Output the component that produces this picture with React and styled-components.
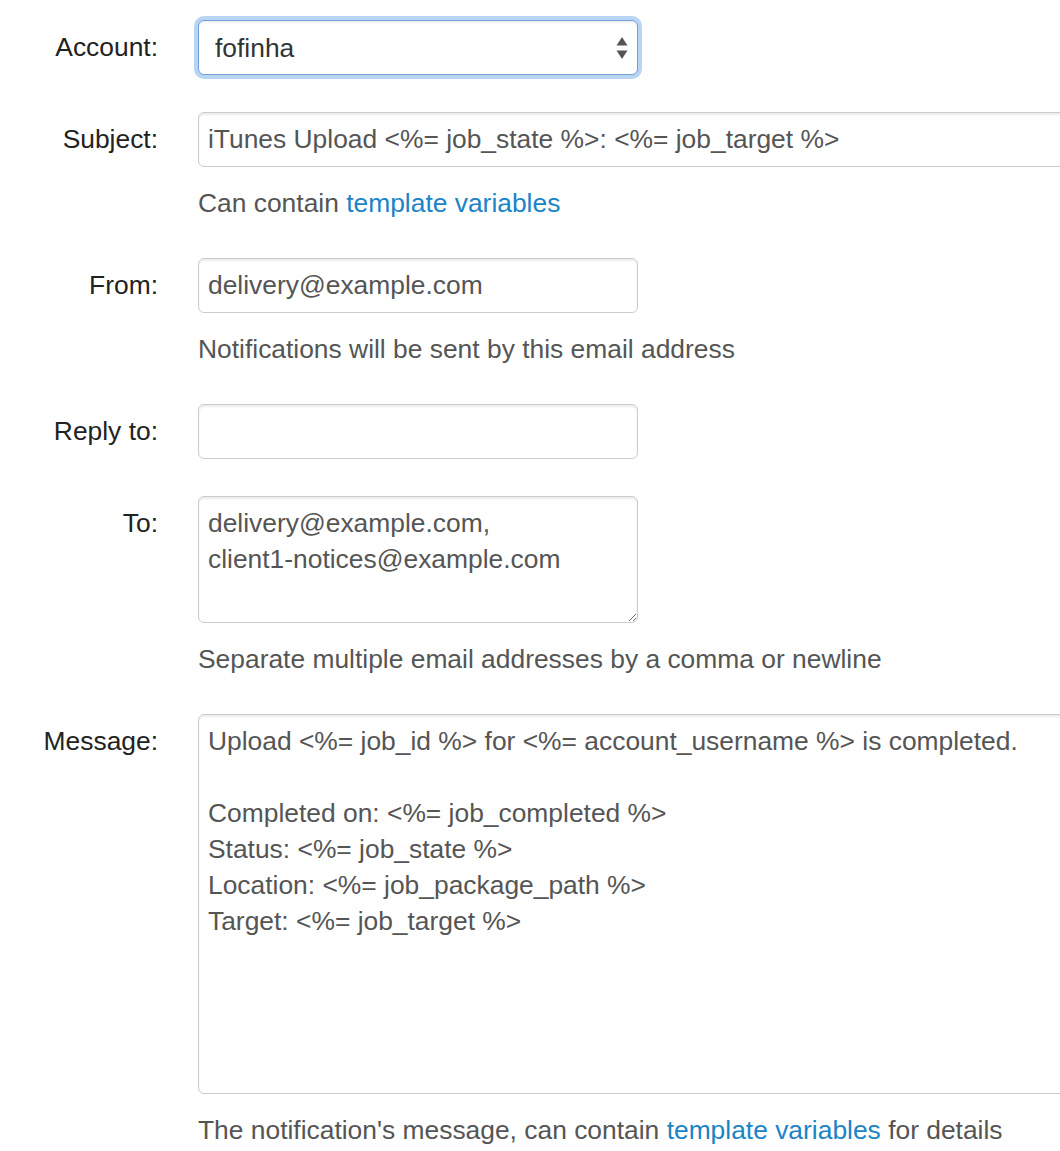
import React from "react";
import styled, { createGlobalStyle } from "styled-components";

const GlobalStyle = createGlobalStyle`
  html, body {
    margin: 0;
    padding: 0;
    overflow: hidden;
    background: #fff;
  }
  body {
    font-family: "Liberation Sans", Arial, Helvetica, sans-serif;
    font-size: 26.4px;
    line-height: 36px;
    color: #333;
  }
`;

const Form = styled.form`
  padding-top: 20px;
  width: 1060px;
  overflow: hidden;
`;

const FormGroup = styled.div`
  display: grid;
  grid-template-columns: 158px 1fr;
  column-gap: 40px;
  margin-bottom: 37px;
`;

const Label = styled.label`
  text-align: right;
  padding-top: 9px;
  line-height: 36px;
  color: #222;
  white-space: nowrap;
`;

const Controls = styled.div`
  min-width: 0;
`;

const fieldBase = `
  box-sizing: border-box;
  display: block;
  border: 1px solid #cccccc;
  border-radius: 6px;
  background: #fff;
  font-family: inherit;
  font-size: 26.4px;
  color: #555;
  box-shadow: inset 0 2px 2px rgba(0, 0, 0, 0.075);
  outline: none;
  margin: 0;
`;

const Input = styled.input`
  ${fieldBase}
  width: ${(p) => (p.$wide ? "1000px" : "440px")};
  height: 55px;
  padding: 0 9px;
  line-height: 36px;
`;

const TextArea = styled.textarea`
  ${fieldBase}
  width: ${(p) => (p.$wide ? "1000px" : "440px")};
  height: ${(p) => p.$h}px;
  padding: 8px 9px;
  line-height: 36px;
  resize: ${(p) => (p.$wide ? "none" : "both")};
  overflow: hidden;
`;

const SelectWrap = styled.div`
  position: relative;
  width: 440px;
  height: 55px;
`;

const Select = styled.select`
  ${fieldBase}
  appearance: none;
  -webkit-appearance: none;
  width: 100%;
  height: 55px;
  padding: 0 16px;
  border: 1px solid #6d9fd8;
  box-shadow: 0 0 0 4px rgba(128, 178, 232, 0.55),
    inset 0 2px 2px rgba(0, 0, 0, 0.06);
  color: #333;
`;

const Arrows = styled.svg`
  position: absolute;
  right: 10px;
  top: 17px;
  pointer-events: none;
`;

const Help = styled.div`
  margin-top: 18px;
  line-height: 36px;
  color: #555;
  white-space: nowrap;
`;

const Link = styled.a`
  color: #1a84c7;
  text-decoration: none;
`;

const messageText = `Upload <%= job_id %> for <%= account_username %> is completed.

Completed on: <%= job_completed %>
Status: <%= job_state %>
Location: <%= job_package_path %>
Target: <%= job_target %>`;

export default function App() {
  return (
    <>
      <GlobalStyle />
      <Form onSubmit={(e) => e.preventDefault()}>
        <FormGroup>
          <Label>Account:</Label>
          <Controls>
            <SelectWrap>
              <Select defaultValue="fofinha">
                <option value="fofinha">fofinha</option>
              </Select>
              <Arrows width="12" height="22" viewBox="0 0 12 22">
                <polygon points="6,0 11.5,8.5 0.5,8.5" fill="#555" />
                <polygon points="0.5,13.5 11.5,13.5 6,22" fill="#555" />
              </Arrows>
            </SelectWrap>
          </Controls>
        </FormGroup>

        <FormGroup>
          <Label>Subject:</Label>
          <Controls>
            <Input
              $wide
              defaultValue="iTunes Upload <%= job_state %>: <%= job_target %>"
            />
            <Help>
              Can contain <Link href="#">template variables</Link>
            </Help>
          </Controls>
        </FormGroup>

        <FormGroup>
          <Label>From:</Label>
          <Controls>
            <Input defaultValue="delivery@example.com" />
            <Help>Notifications will be sent by this email address</Help>
          </Controls>
        </FormGroup>

        <FormGroup>
          <Label>Reply to:</Label>
          <Controls>
            <Input defaultValue="" />
          </Controls>
        </FormGroup>

        <FormGroup>
          <Label>To:</Label>
          <Controls>
            <TextArea
              $h={127}
              defaultValue={"delivery@example.com,\nclient1-notices@example.com"}
            />
            <Help>Separate multiple email addresses by a comma or newline</Help>
          </Controls>
        </FormGroup>

        <FormGroup>
          <Label>Message:</Label>
          <Controls>
            <TextArea $wide $h={380} defaultValue={messageText} />
            <Help>
              The notification's message, can contain{" "}
              <Link href="#">template variables</Link> for details
            </Help>
          </Controls>
        </FormGroup>
      </Form>
    </>
  );
}
